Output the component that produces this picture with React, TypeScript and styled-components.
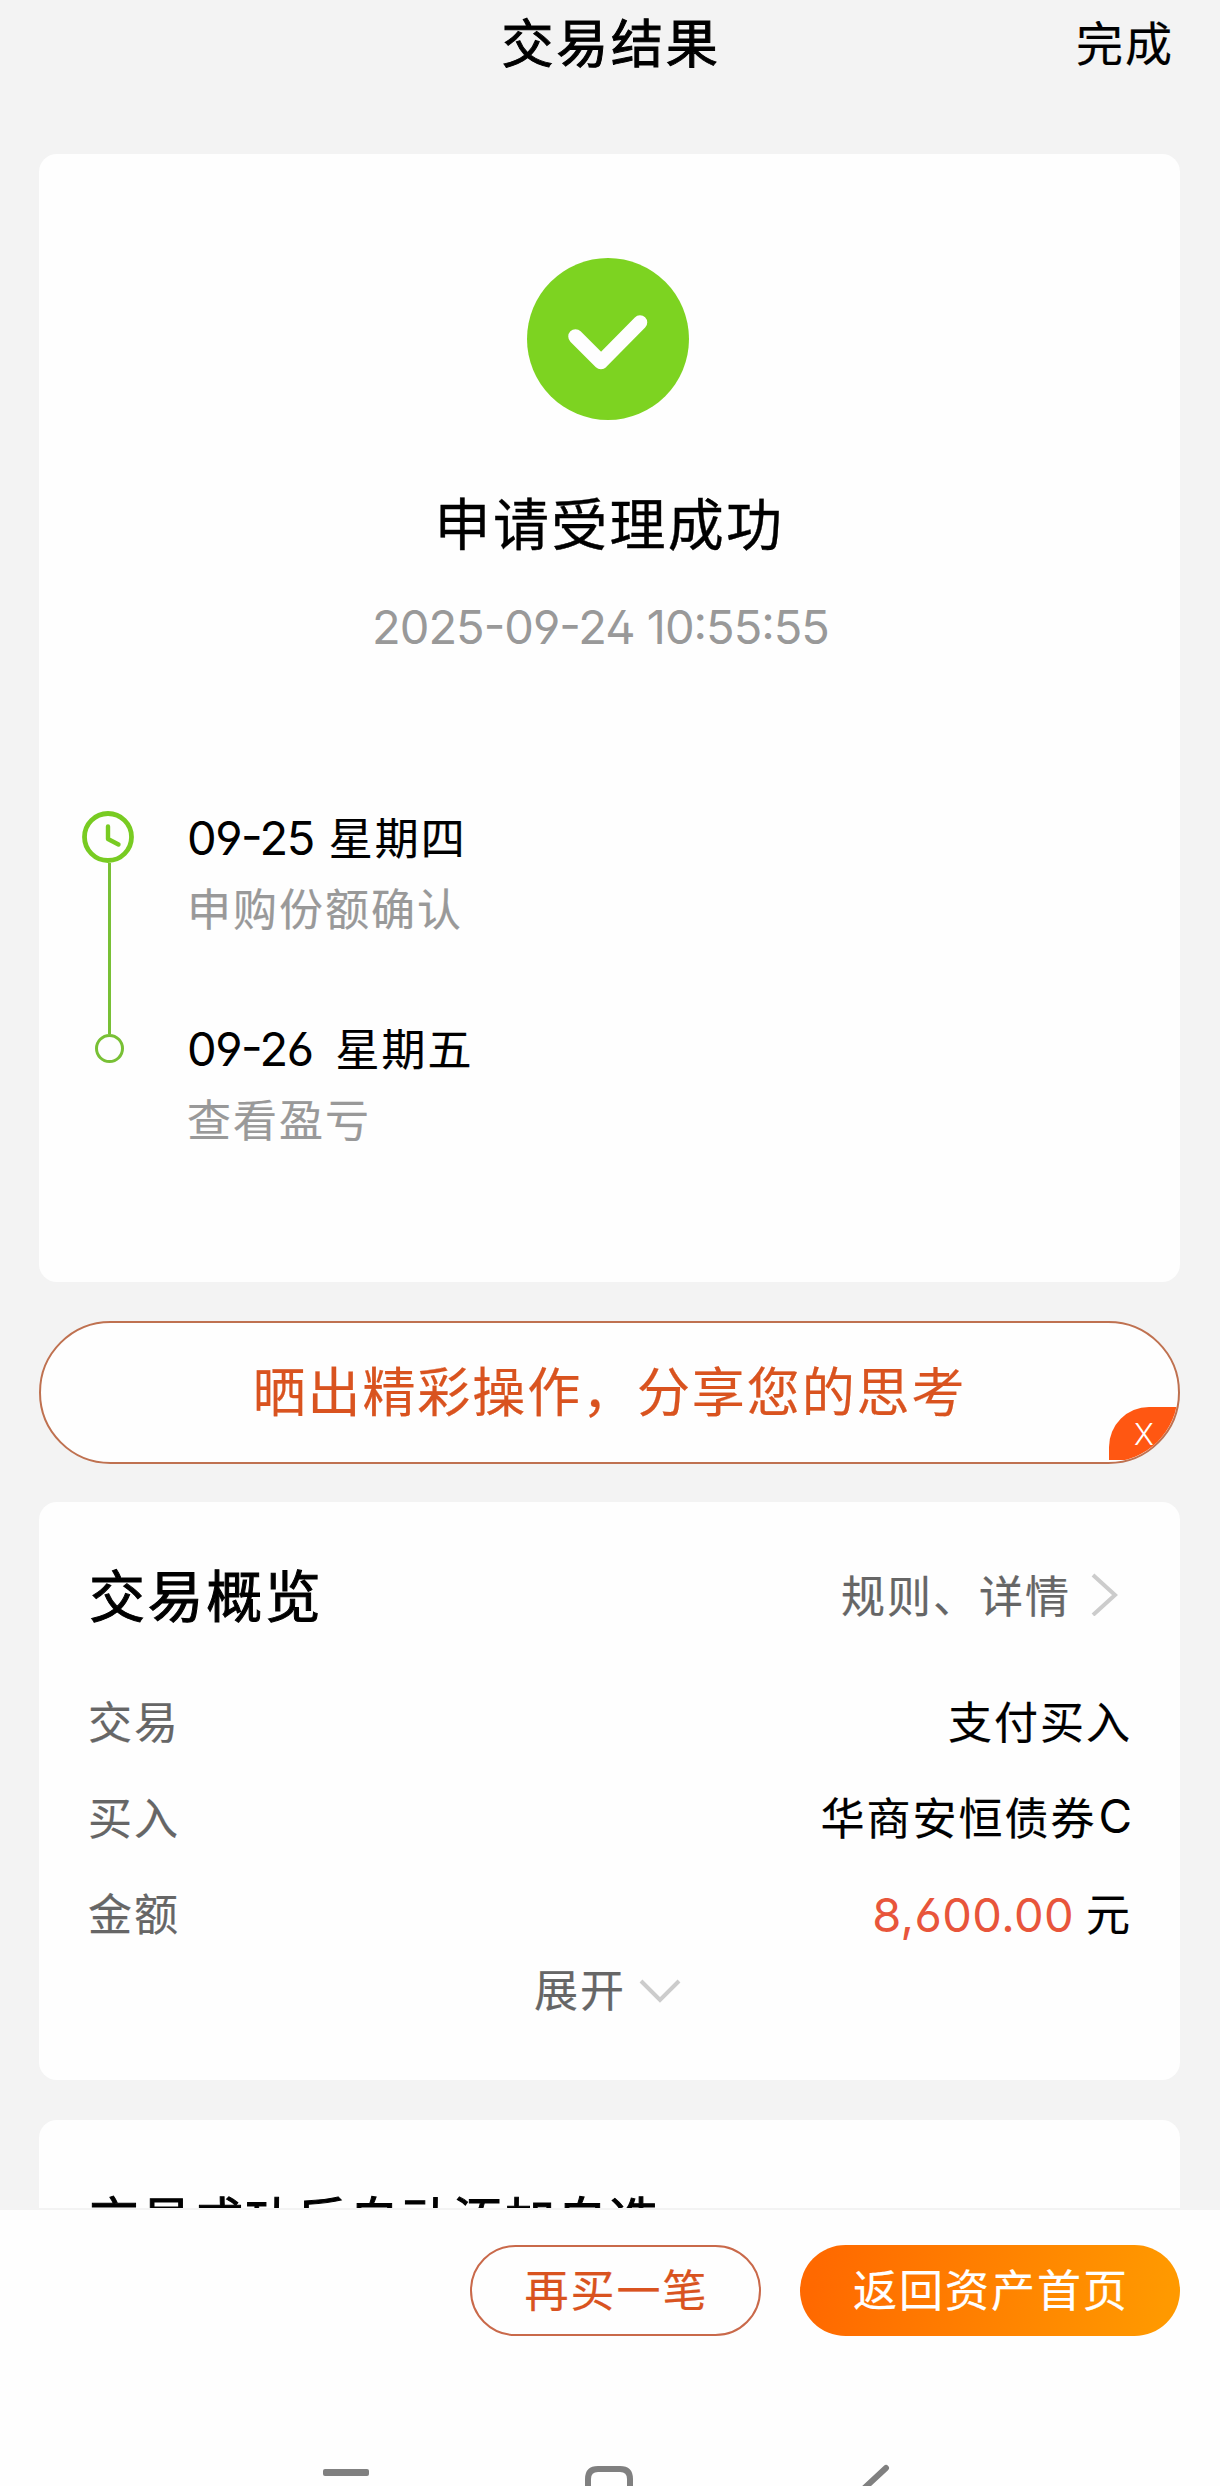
import React from 'react';
import styled, { createGlobalStyle } from 'styled-components';

const GlobalStyle = createGlobalStyle`
  * { box-sizing: border-box; }
  body {
    margin: 0;
    background: #f3f3f3;
    font-family: "Noto Sans CJK SC", sans-serif;
    color: #000;
  }
`;

const Screen = styled.div`
  display: flex;
  flex-direction: column;
  width: 1220px;
  height: 2486px;
  overflow: hidden;
  background: #f3f3f3;
`;

const Content = styled.main`
  height: 2208px;
  overflow: hidden;
  padding: 0 40px 0 39px;
`;

const Text = styled.span<{
  $size: number;
  $color?: string;
  $stroke?: number;
  $spacing?: number;
}>`
  font-size: ${(p) => p.$size}px;
  color: ${(p) => p.$color ?? '#000'};
  font-weight: 400;
  -webkit-text-stroke: ${(p) => p.$stroke ?? 0.2}px currentColor;
  letter-spacing: ${(p) => p.$spacing ?? 2}px;
  white-space: pre;
`;

const Digits = styled(Text)`
  font-family: Inter, "Noto Sans CJK SC", sans-serif;
  font-feature-settings: "cv03", "cv04", "ss01", "case";
  -webkit-text-stroke: 0;
`;

const Header = styled.header`
  display: grid;
  grid-template-columns: 1fr auto 1fr;
  align-items: center;
  height: 81px;
  margin-bottom: 73px;
  line-height: 81px;
`;

const HeaderTitle = styled.h1`
  grid-column: 2;
  margin: 0;
  display: flex;
  padding-left: 3px;
`;

const HeaderAction = styled.div`
  display: flex;
  justify-content: flex-end;
  padding-right: 6px;
`;

const Card = styled.section<{ $height: number }>`
  display: flex;
  flex-direction: column;
  height: ${(p) => p.$height}px;
  border-radius: 18px;
  background: #fefefe;
`;

const ResultHead = styled.div`
  display: flex;
  flex-direction: column;
  align-items: center;
  padding: 104px 3px 0 0;
`;

const ResultTitle = styled.h2`
  display: flex;
  margin: 61px 0 36px;
  padding-left: 3px;
  line-height: 80px;
`;

const ResultTime = styled.div`
  display: flex;
  line-height: 60px;
  padding-right: 15px;
`;

const Timeline = styled.div`
  display: flex;
  margin-top: 151px;
  padding-left: 43px;
`;

const Rail = styled.div`
  display: flex;
  flex-direction: column;
  align-items: center;
  width: 52px;
  padding-top: 3px;
  margin-right: 53px;
`;

const RailLine = styled.div`
  width: 3px;
  height: 171px;
  margin-left: 2px;
  background: #78c035;
`;

const RailDot = styled.div`
  width: 29px;
  height: 29px;
  margin-left: 2px;
  border: 3px solid #78c035;
  border-radius: 50%;
`;

const Steps = styled.div`
  display: flex;
  flex-direction: column;
  gap: 82px;
`;

const Step = styled.div`
  display: flex;
  flex-direction: column;
  gap: 9px;
  line-height: 60px;
`;

const StepTitle = styled.div<{ $gap: number }>`
  display: flex;
  align-items: center;
  gap: ${(p) => p.$gap}px;
  height: 60px;
`;

const StepDay = styled.div`
  display: flex;
  padding-bottom: 5px;
`;

const Share = styled.div`
  position: relative;
  display: flex;
  align-items: center;
  justify-content: center;
  height: 143px;
  margin: 39px 0 38px;
  padding-bottom: 8px;
  border: 2px solid #bf7150;
  border-radius: 72px;
  background: #fefefe;
  overflow: hidden;
`;

const ShareClose = styled.button`
  position: absolute;
  right: 0;
  bottom: 2px;
  display: flex;
  align-items: center;
  width: 69px;
  height: 53px;
  padding: 0 0 0 25px;
  border: 0;
  border-radius: 40px 0 0 0;
  background: #ff5712;
  color: #fff;
  font: 300 30px Inter, sans-serif;
`;

const OverviewHead = styled.div`
  display: flex;
  align-items: center;
  justify-content: space-between;
  height: 80px;
  margin: 50px 50px 40px;
`;

const DetailLink = styled.div`
  display: flex;
  align-items: center;
  padding: 4px 12px 0 0;
  gap: 20px;
`;

const Row = styled.div`
  display: flex;
  align-items: center;
  justify-content: space-between;
  height: 96px;
  padding: 0 48px 0 49px;
`;

const Value = styled.div<{ $gap?: number }>`
  display: flex;
  align-items: center;
  gap: ${(p) => p.$gap ?? 0}px;
`;

const Amount = styled.div`
  display: flex;
  padding-top: 5px;
`;

const Expand = styled.div`
  display: flex;
  align-items: center;
  justify-content: center;
  gap: 13px;
  height: 56px;
  padding-right: 4px;
  svg { margin-top: 6px; }
`;

const NextCard = styled(Card)`
  margin-top: 40px;
`;

const NextTitle = styled.h2`
  display: flex;
  margin: 57px 50px 0;
  line-height: 80px;
`;

const Footer = styled.footer`
  display: flex;
  flex-direction: column;
  justify-content: space-between;
  height: 278px;
  border-top: 2px solid #f3f3f3;
  background: #fefefe;
`;

const Actions = styled.div`
  display: flex;
  justify-content: flex-end;
  gap: 39px;
  padding: 35px 40px 0;
`;

const Action = styled.button<{ $width: number; $primary?: boolean }>`
  display: flex;
  align-items: center;
  justify-content: center;
  width: ${(p) => p.$width}px;
  height: 91px;
  padding: 0 0 6px 2px;
  border: ${(p) => (p.$primary ? '0' : '2px solid #c9694a')};
  border-radius: 46px;
  background: ${(p) =>
    p.$primary ? 'linear-gradient(100deg, #ff6900 5%, #ff9900 95%)' : '#fefefe'};
  font-family: inherit;
`;

const SystemNav = styled.nav`
  display: flex;
  align-items: flex-end;
  height: 22px;
  padding-left: 323px;
  svg { display: block; }
`;

const HomeIcon = styled.svg`
  margin-left: 216px;
`;

const BackIcon = styled.svg`
  margin-left: 221px;
`;

const Success = () => (
  <svg width="162" height="162" viewBox="0 0 162 162">
    <circle cx="81" cy="81" r="81" fill="#7dd321" />
    <path
      d="M48.5 78.5L74 104L113 64.5"
      fill="none"
      stroke="#fefefe"
      strokeWidth="14.5"
      strokeLinecap="round"
      strokeLinejoin="round"
    />
  </svg>
);

const Clock = () => (
  <svg width="52" height="52" viewBox="0 0 52 52" fill="none" stroke="#78cb22">
    <circle cx="26" cy="26" r="23.5" strokeWidth="4.8" />
    <path d="M26 15.5V28L36.5 33.5" strokeWidth="4.4" strokeLinecap="round" strokeLinejoin="round" />
  </svg>
);

const STEPS = [
  { date: '09-25', day: '星期四', gap: 15, note: '申购份额确认' },
  { date: '09-26', day: '星期五', gap: 23, note: '查看盈亏' },
];

export default function App() {
  return (
    <Screen>
      <GlobalStyle />
      <Content>
        <Header>
          <HeaderTitle>
            <Text $size={52} $stroke={1} $spacing={2.8}>交易结果</Text>
          </HeaderTitle>
          <HeaderAction>
            <Text $size={47} $spacing={2}>完成</Text>
          </HeaderAction>
        </Header>

        <Card $height={1128}>
          <ResultHead>
            <Success />
            <ResultTitle>
              <Text $size={56} $stroke={0.4} $spacing={2.3}>申请受理成功</Text>
            </ResultTitle>
            <ResultTime>
              <Digits $size={47} $color="#999" $spacing={-1}>
                2025-09-24 10:55:55
              </Digits>
            </ResultTime>
          </ResultHead>
          <Timeline>
            <Rail>
              <Clock />
              <RailLine />
              <RailDot />
            </Rail>
            <Steps>
              {STEPS.map((s) => (
                <Step key={s.date}>
                  <StepTitle $gap={s.gap}>
                    <Digits $size={47} $spacing={-1.5}>{s.date}</Digits>
                    <StepDay>
                      <Text $size={44}>{s.day}</Text>
                    </StepDay>
                  </StepTitle>
                  <Text $size={44} $color="#999">{s.note}</Text>
                </Step>
              ))}
            </Steps>
          </Timeline>
        </Card>

        <Share>
          <Text $size={53} $color="#d9531f" $spacing={1.9}>晒出精彩操作，分享您的思考</Text>
          <ShareClose>X</ShareClose>
        </Share>

        <Card $height={578}>
          <OverviewHead>
            <Text $size={56} $stroke={1} $spacing={2.6}>交易概览</Text>
            <DetailLink>
              <Text $size={44} $color="#666">规则、详情</Text>
              <svg width="27" height="44" viewBox="0 0 27 44" fill="none" stroke="#ccc" strokeWidth="4">
                <path d="M2 3L24 23L2 43" />
              </svg>
            </DetailLink>
          </OverviewHead>
          <Row>
            <Text $size={44} $color="#666">交易</Text>
            <Value><Text $size={44}>支付买入</Text></Value>
          </Row>
          <Row>
            <Text $size={44} $color="#666">买入</Text>
            <Value $gap={2}>
              <Text $size={44}>华商安恒债券</Text>
              <Digits $size={46} $spacing={0}>C</Digits>
            </Value>
          </Row>
          <Row>
            <Text $size={44} $color="#666">金额</Text>
            <Value $gap={12}>
              <Amount>
                <Digits $size={47} $color="#e8553b" $spacing={0.4}>8,600.00</Digits>
              </Amount>
              <Text $size={44}>元</Text>
            </Value>
          </Row>
          <Expand>
            <Text $size={44} $color="#666">展开</Text>
            <svg width="42" height="25" viewBox="0 0 42 25" fill="none" stroke="#ccc" strokeWidth="4">
              <path d="M2 2L21 21L40 2" />
            </svg>
          </Expand>
        </Card>

        <NextCard $height={300}>
          <NextTitle>
            <Text $size={50} $stroke={1} $spacing={2}>交易成功后自动添加自选</Text>
          </NextTitle>
        </NextCard>
      </Content>

      <Footer>
        <Actions>
          <Action $width={291}>
            <Text $size={44} $color="#d9531f">再买一笔</Text>
          </Action>
          <Action $width={380} $primary>
            <Text $size={44} $color="#fff">返回资产首页</Text>
          </Action>
        </Actions>
        <SystemNav>
          <svg width="46" height="18" viewBox="0 0 46 18">
            <rect x="0" y="1" width="46" height="7" rx="2" fill="#808080" />
          </svg>
          <HomeIcon width="48" height="21" viewBox="0 0 48 21" fill="none" stroke="#808080" strokeWidth="6">
            <path d="M3 24V14Q3 4 13 4H35Q45 4 45 14V24" />
          </HomeIcon>
          <BackIcon width="40" height="22" viewBox="0 0 40 22" fill="none" stroke="#808080" strokeWidth="6">
            <path d="M32 4L4 30" strokeLinecap="round" />
          </BackIcon>
        </SystemNav>
      </Footer>
    </Screen>
  );
}
